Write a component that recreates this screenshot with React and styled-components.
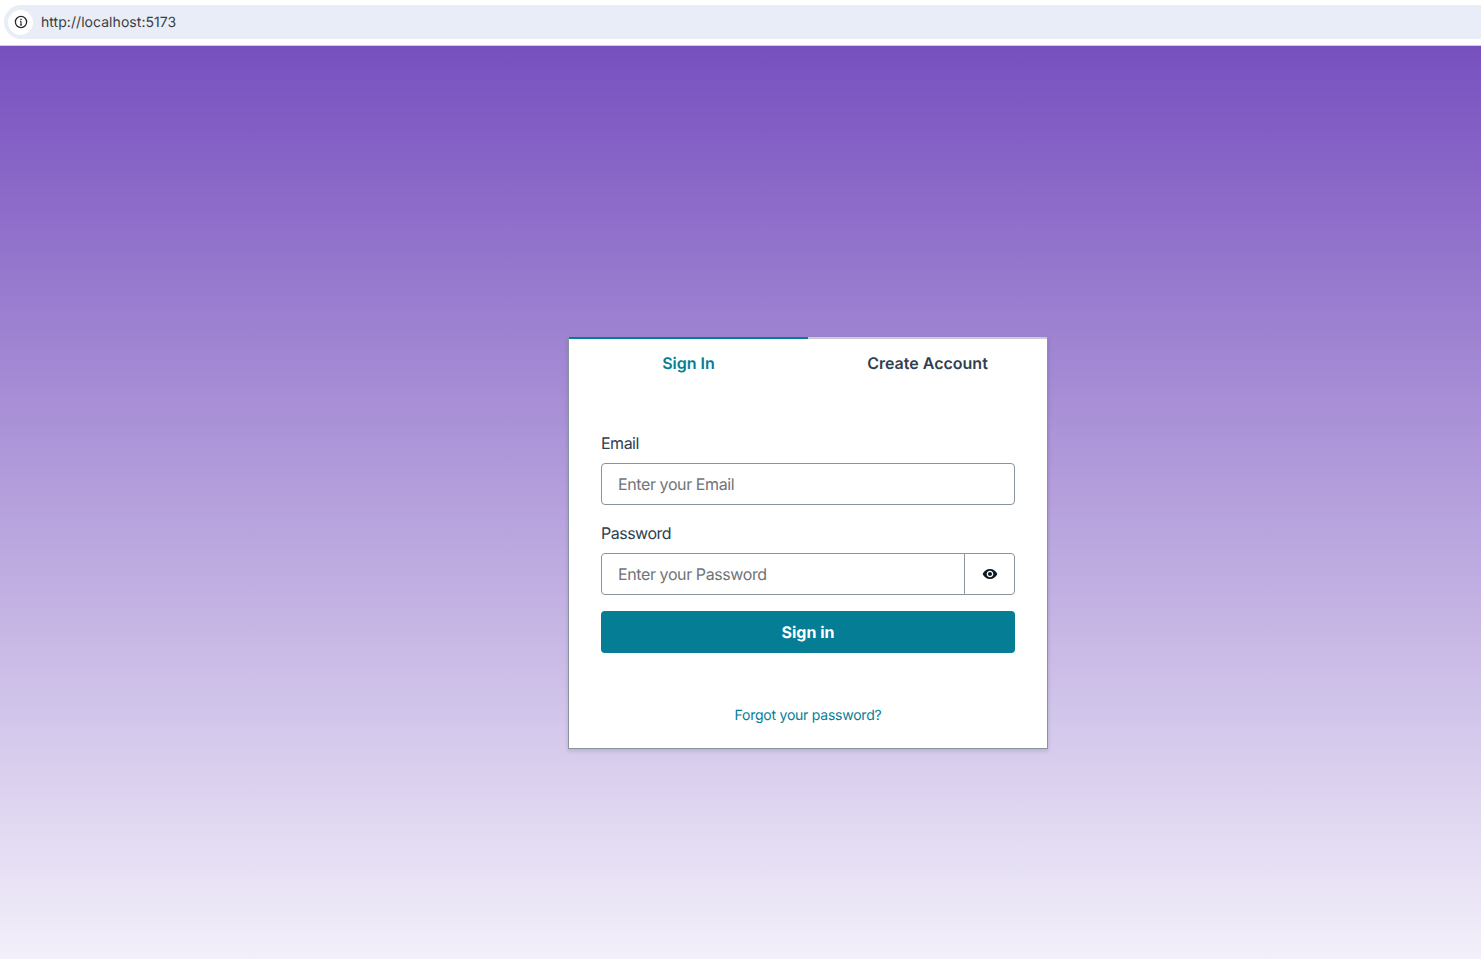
import styled, { createGlobalStyle } from 'styled-components';
import { MdVisibility } from 'react-icons/md';

const GlobalStyle = createGlobalStyle`
  html, body {
    margin: 0;
    padding: 0;
    height: 100%;
    overflow: hidden;
    font-family: 'Inter', 'Liberation Sans', sans-serif;
    text-rendering: geometricPrecision;
  }
`;

const Page = styled.div`
  display: flex;
  flex-direction: column;
  height: 959px;
  background: #fff;
`;

const BrowserBar = styled.header`
  flex: none;
  box-sizing: border-box;
  height: 46px;
  padding: 5px 0 6px 4px;
  border-bottom: 1px solid #cfcdd6;
  background: #fff;
`;

const AddressPill = styled.div`
  display: flex;
  align-items: center;
  gap: 8px;
  height: 34px;
  padding-left: 4px;
  border-radius: 17px 0 0 17px;
  background: #e9edf7;
  color: #3a3d42;
  font-size: 14px;
  letter-spacing: 0.05px;
`;

const SiteInfo = styled.span`
  display: flex;
  align-items: center;
  justify-content: center;
  width: 25px;
  height: 25px;
  border-radius: 50%;
  background: #fff;
`;

const Main = styled.main`
  flex: 1;
  display: flex;
  justify-content: center;
  align-items: flex-start;
  box-sizing: border-box;
  padding: 291px 0 0 135px;
  background: linear-gradient(180deg, #7750bf 0%, #f3f0fa 100%);
`;

const Card = styled.section`
  box-sizing: border-box;
  width: 480px;
  height: 412px;
  border: 1px solid #89949f;
  border-top: 0;
  background: #fff;
  box-shadow: 0 2px 4px rgba(13, 26, 38, 0.15);
`;

const Tabs = styled.nav`
  display: flex;
`;

const Tab = styled.button`
  flex: 1;
  height: 51px;
  padding: 0 0 2px;
  border: 0;
  border-top: 2px solid ${({ $active }) => ($active ? '#047d95' : '#c8ccd0')};
  background: transparent;
  color: ${({ $active }) => ($active ? '#047d95' : '#304050')};
  font: 600 16px/24px 'Inter', 'Liberation Sans', sans-serif;
  text-rendering: geometricPrecision;
`;

const Form = styled.form`
  display: flex;
  flex-direction: column;
  gap: 16px;
  padding: 43px 32px 0;
`;

const Field = styled.div`
  display: flex;
  flex-direction: column;
  gap: 8px;
`;

const Label = styled.label`
  color: #304050;
  font-size: 16px;
  line-height: 24px;
  letter-spacing: -0.5px;
`;

const Group = styled.div`
  display: flex;
  height: 42px;
`;

const Input = styled.input`
  flex: 1;
  min-width: 0;
  box-sizing: border-box;
  height: 42px;
  padding: 0 16px;
  border: 1px solid #89949f;
  border-radius: ${({ $joined }) => ($joined ? '4px 0 0 4px' : '4px')};
  outline: none;
  background: #fff;
  color: #0d1a26;
  font: 400 16px 'Inter', 'Liberation Sans', sans-serif;
  letter-spacing: -0.4px;
  text-rendering: geometricPrecision;

  &::placeholder {
    color: #6f7478;
    opacity: 1;
  }
`;

const EyeButton = styled.button`
  display: flex;
  align-items: center;
  justify-content: center;
  box-sizing: border-box;
  width: 51px;
  height: 42px;
  margin-left: -1px;
  padding: 0;
  border: 1px solid #89949f;
  border-radius: 0 4px 4px 0;
  background: #fff;
  color: #0d1a26;
`;

const Submit = styled.button`
  height: 42px;
  border: 0;
  border-radius: 4px;
  background: #047d95;
  color: #fff;
  font: 700 16px 'Inter', 'Liberation Sans', sans-serif;
  text-rendering: geometricPrecision;
`;

const Footer = styled.footer`
  display: flex;
  justify-content: center;
  padding-top: 47px;
`;

const ForgotLink = styled.button`
  height: 31px;
  padding: 0;
  border: 0;
  background: transparent;
  color: #047d95;
  font: 400 14px 'Inter', 'Liberation Sans', sans-serif;
  letter-spacing: -0.24px;
  text-rendering: geometricPrecision;
`;

const InfoIcon = () => (
  <svg width="14" height="14" viewBox="0 0 14 14" fill="none" stroke="#24272b" strokeWidth="1.3">
    <circle cx="7" cy="7" r="5.6" />
    <path d="M7 6.2v3.8M5.9 10h2.2M6 6.3h1" strokeWidth="1.1" />
    <path d="M7 3.7v1.2" strokeWidth="1.4" />
  </svg>
);

const App = () => {
  return (
    <Page>
      <GlobalStyle />
      <BrowserBar>
        <AddressPill>
          <SiteInfo>
            <InfoIcon />
          </SiteInfo>
          http://localhost:5173
        </AddressPill>
      </BrowserBar>
      <Main>
        <Card>
          <Tabs>
            <Tab type="button" $active>Sign In</Tab>
            <Tab type="button">Create Account</Tab>
          </Tabs>
          <Form onSubmit={(e) => e.preventDefault()}>
            <Field>
              <Label htmlFor="email">Email</Label>
              <Group>
                <Input id="email" placeholder="Enter your Email" />
              </Group>
            </Field>
            <Field>
              <Label htmlFor="password">Password</Label>
              <Group>
                <Input id="password" type="password" placeholder="Enter your Password" $joined />
                <EyeButton type="button" aria-label="Show password">
                  <MdVisibility size={16} />
                </EyeButton>
              </Group>
            </Field>
            <Submit type="submit">Sign in</Submit>
          </Form>
          <Footer>
            <ForgotLink type="button">Forgot your password?</ForgotLink>
          </Footer>
        </Card>
      </Main>
    </Page>
  );
};

export default App;
